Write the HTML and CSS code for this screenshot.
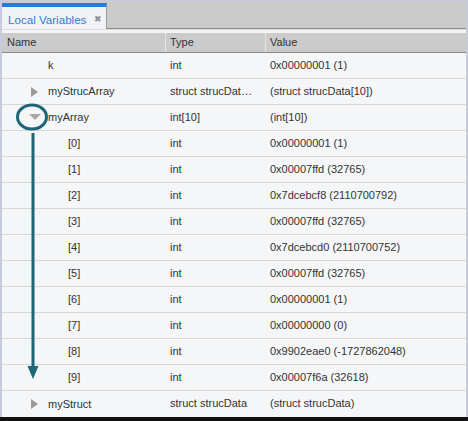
FILE: index.html
```html
<!DOCTYPE html>
<html>
<head>
<meta charset="utf-8">
<link rel="stylesheet" href="styles.css">
</head>
<body>
<div class="frame">
  <div class="tabbar">
    <div class="tab"><span class="tab-title">Local Variables</span><span class="tab-close">✖</span></div>
  </div>
  <div class="gap"></div>
  <div class="header">
    <div class="hcell">Name</div>
    <div class="hcell sep">Type</div>
    <div class="hcell sep">Value</div>
  </div>
  <div class="rows">
    <div class="row"><div class="name"><span class="tog"></span>k</div><div class="cell">int</div><div class="cell">0x00000001 (1)</div></div>
    <div class="row"><div class="name"><span class="tog"><i class="tri-right"></i></span>myStrucArray</div><div class="cell">struct strucDat…</div><div class="cell">(struct strucData[10])</div></div>
    <div class="row"><div class="name"><span class="tog"><i class="tri-down"></i></span>myArray</div><div class="cell">int[10]</div><div class="cell">(int[10])</div></div>
    <div class="row"><div class="name child">[0]</div><div class="cell">int</div><div class="cell">0x00000001 (1)</div></div>
    <div class="row"><div class="name child">[1]</div><div class="cell">int</div><div class="cell">0x00007ffd (32765)</div></div>
    <div class="row"><div class="name child">[2]</div><div class="cell">int</div><div class="cell">0x7dcebcf8 (2110700792)</div></div>
    <div class="row"><div class="name child">[3]</div><div class="cell">int</div><div class="cell">0x00007ffd (32765)</div></div>
    <div class="row"><div class="name child">[4]</div><div class="cell">int</div><div class="cell">0x7dcebcd0 (2110700752)</div></div>
    <div class="row"><div class="name child">[5]</div><div class="cell">int</div><div class="cell">0x00007ffd (32765)</div></div>
    <div class="row"><div class="name child">[6]</div><div class="cell">int</div><div class="cell">0x00000001 (1)</div></div>
    <div class="row"><div class="name child">[7]</div><div class="cell">int</div><div class="cell">0x00000000 (0)</div></div>
    <div class="row"><div class="name child">[8]</div><div class="cell">int</div><div class="cell">0x9902eae0 (-1727862048)</div></div>
    <div class="row"><div class="name child">[9]</div><div class="cell">int</div><div class="cell">0x00007f6a (32618)</div></div>
    <div class="row"><div class="name"><span class="tog"><i class="tri-right"></i></span>myStruct</div><div class="cell">struct strucData</div><div class="cell">(struct strucData)</div></div>
  </div>
  <div class="bottom"></div>
  <svg class="annot" width="468" height="421" viewBox="0 0 468 421">
    <ellipse cx="32" cy="117" rx="14.5" ry="12" fill="none" stroke="#1c6677" stroke-width="3"/>
    <line x1="33" y1="133" x2="33" y2="368" stroke="#1c6677" stroke-width="3"/>
    <polygon points="27.5,366 38.5,366 33,379" fill="#1c6677"/>
  </svg>
</div>
</body>
</html>
```

FILE: styles.css
```css
html, body {
  margin: 0;
  padding: 0;
}
body {
  font-family: "Liberation Sans", Arial, sans-serif;
  font-size: 11px;
  color: #333;
}
.frame {
  position: relative;
  width: 468px;
  height: 421px;
  box-sizing: border-box;
  background: #c7cbdb;
  padding: 1px 2px 0 2px;
  display: flex;
  flex-direction: column;
  overflow: hidden;
}
.tabbar {
  height: 27px;
  flex: none;
  background: #cbcbcb;
  border-bottom: 1px solid #8c8c8c;
  display: flex;
  align-items: flex-end;
}
.tab {
  box-sizing: border-box;
  width: 105px;
  height: 26px;
  margin-bottom: -1px;
  border-top: 4px solid #2d7ad6;
  border-right: 1px solid #9a9a9a;
  background: #f1f3f6;
  display: flex;
  align-items: center;
  padding-left: 6px;
}
.tab-title {
  color: #3579d2;
  font-size: 11.6px;
  padding-top: 2px;
}
.tab-close {
  color: #8e8e8e;
  font-size: 9px;
  margin-left: 8px;
  padding-top: 1px;
}
.gap {
  height: 4px;
  flex: none;
  background: #f4f4f4;
  border-top: 1px solid #dcdcdc;
  box-sizing: border-box;
}
.header {
  height: 20px;
  flex: none;
  box-sizing: border-box;
  background: #cbcbcb;
  border-bottom: 1px solid #8c8c8c;
  display: grid;
  grid-template-columns: 163px 100px 1fr;
}
.hcell {
  line-height: 19px;
  padding-left: 5px;
  color: #333;
}
.hcell.sep {
  border-left: 1px solid #e6e6e6;
  padding-left: 4px;
}
.rows {
  flex: none;
  background: #f5f6f8;
}
.row {
  height: 26px;
  box-sizing: border-box;
  border-bottom: 1px solid #d6d6d6;
  display: grid;
  grid-template-columns: 163px 100px 1fr;
  line-height: 25px;
  white-space: nowrap;
}
.row:last-child {
  border-bottom: none;
}
.name {
  display: flex;
  align-items: center;
  padding-left: 27px;
}
.name.child {
  padding-left: 66px;
}
.tog {
  width: 19px;
  height: 25px;
  flex: none;
  display: flex;
  align-items: center;
}
.tri-right {
  display: block;
  width: 0;
  height: 0;
  margin-left: 2px;
  border-left: 7px solid #9b9b9b;
  border-top: 5px solid transparent;
  border-bottom: 5px solid transparent;
}
.tri-down {
  display: block;
  width: 0;
  height: 0;
  margin-top: -2px;
  border-top: 6px solid #a9a9a9;
  border-left: 6px solid transparent;
  border-right: 6px solid transparent;
}
.cell {
  padding-left: 5px;
  overflow: hidden;
}
.bottom {
  flex: 1;
  background: #111;
  margin: 0 -2px;
}
.annot {
  position: absolute;
  left: 0;
  top: 0;
  pointer-events: none;
}
```
